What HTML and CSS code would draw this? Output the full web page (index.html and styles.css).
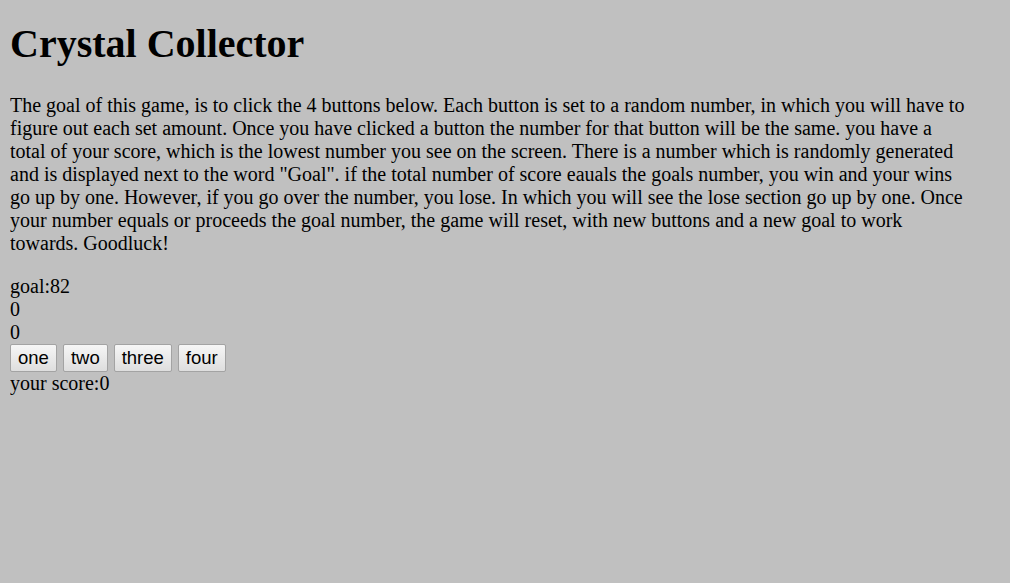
FILE: index.html
```html
<!DOCTYPE html>
<html>
<head>
<meta charset="utf-8">
<link rel="stylesheet" href="styles.css">
</head>
<body>
<h1 class="title">Crystal Collector</h1>
<p class="intro">The goal of this game, is to click the 4 buttons below. Each button is set to a random number, in which you will have to figure out each set amount. Once you have clicked a button the number for that button will be the same. you have a total of your score, which is the lowest number you see on the screen. There is a number which is randomly generated and is displayed next to the word "Goal". if the total number of score eauals the goals number, you win and your wins go up by one. However, if you go over the number, you lose. In which you will see the lose section go up by one. Once your number equals or proceeds the goal number, the game will reset, with new buttons and a new goal to work towards. Goodluck!</p>
<div class="line">goal:82</div>
<div class="line">0</div>
<div class="line">0</div>
<div class="buttons">
<button class="btn">one</button>
<button class="btn">two</button>
<button class="btn">three</button>
<button class="btn">four</button>
</div>
<div class="line">your score:0</div>
</body>
</html>
```
FILE: styles.css
```css
html, body {
  background: #c0c0c0;
}
body {
  margin: 10px;
  font-family: "Liberation Serif", "Times New Roman", serif;
  font-size: 20px;
  color: #000;
}
.title {
  font-size: 40px;
  font-weight: bold;
  margin: 10px 0 26.8px;
}
.intro {
  margin: 20px 0;
  max-width: 960px;
}
.buttons {
  display: flex;
  gap: 6px;
}
.btn {
  font-family: "Liberation Sans", Arial, sans-serif;
  font-size: 18.5px;
  color: #000;
  height: 28px;
  padding: 1px 7px;
  border: 1px solid #a3a3a3;
  border-radius: 2px;
  background: linear-gradient(#f6f6f6, #dedede);
}
```
